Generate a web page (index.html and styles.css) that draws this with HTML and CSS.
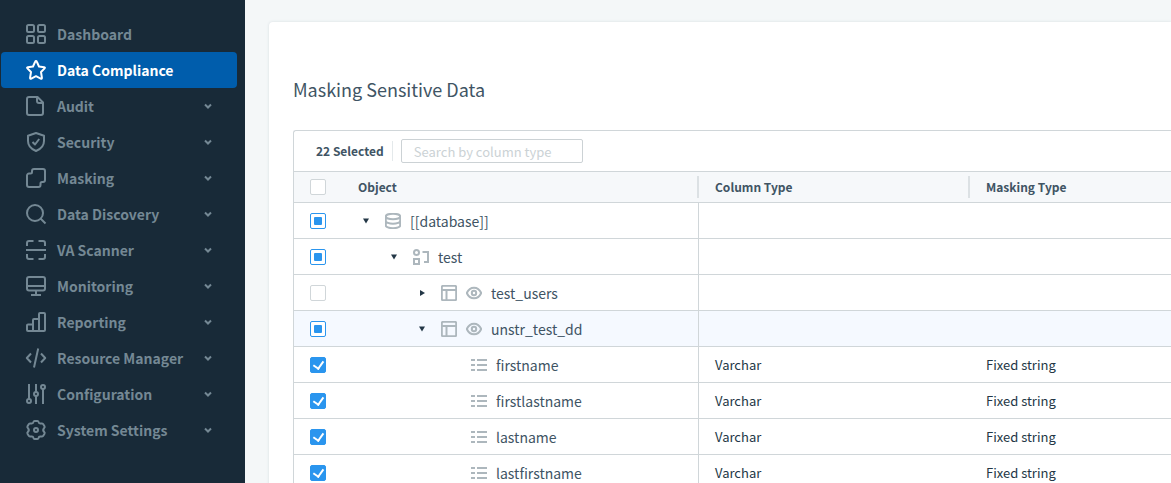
FILE: index.html
```html
<!DOCTYPE html>
<html lang="en">
<head>
<meta charset="utf-8">
<title>Masking Sensitive Data</title>
<link rel="stylesheet" href="styles.css">
</head>
<body>
<svg class="sprite" aria-hidden="true">
  <symbol id="chevron" viewBox="0 0 8 8"><path d="M1 2.500 4 5.500 7 2.500" /></symbol>
  <symbol id="caret-down" viewBox="0 0 8 8"><path d="M1 1.500h6L4 6.500z"/></symbol>
  <symbol id="caret-right" viewBox="0 0 8 8"><path d="M2 1v6l5-3z"/></symbol>
  <symbol id="database" viewBox="0 0 16 16"><ellipse cx="8" cy="3.500" rx="7.200" ry="2.700"/><path d="M.8 3.500v9c0 1.400 3.200 2.700 7.200 2.700s7.200-1.300 7.200-2.700v-9M.8 8c0 1.400 3.200 2.700 7.200 2.700S15.200 9.400 15.200 8"/></symbol>
  <symbol id="schema" viewBox="0 0 16 16"><circle cx="3.500" cy="3.500" r="2.500"/><path d="M1 10h5v5H1zM9.500 3H15v10H11"/></symbol>
  <symbol id="table" viewBox="0 0 16 16"><rect x=".8" y=".8" width="14.400" height="14.400" rx="1.500"/><path d="M1 5h14M5.500 5v10"/></symbol>
  <symbol id="eye" viewBox="0 0 16 16"><path d="M.8 8C2.300 4.500 4.900 2.700 8 2.700S13.700 4.500 15.200 8c-1.500 3.500-4.100 5.300-7.200 5.300S2.300 11.500.8 8z"/><circle cx="8" cy="8" r="2.200"/></symbol>
  <symbol id="list" viewBox="0 0 16 16"><path d="M0 3h4M6 3h10M0 8h4M6 8h10M0 13h4M6 13h10"/></symbol>
</svg>
<div class="app">
  <nav class="sidebar" aria-label="Main">
    <a class="item" href="#dashboard"><svg class="icon" viewBox="0 0 20 20"><rect x="1" y="1" width="7" height="7" rx="1.500"/><rect x="12" y="1" width="7" height="7" rx="1.500"/><rect x="1" y="12" width="7" height="7" rx="1.500"/><rect x="12" y="12" width="7" height="7" rx="1.500"/></svg><span class="label">Dashboard</span></a>
    <a class="item active" href="#compliance" aria-current="page"><svg class="icon" viewBox="0 0 20 20"><path d="M10 1q.5 0 .8.700L13 6.500l5.200.7q1.200.3.400 1.200L15 12l.9 5.700q.1 1.500-1.200.9L10 16.200l-4.700 2.400q-1.300.6-1.200-.9L5 12 1.400 8.400q-.8-.9.400-1.200L7 6.500l2.200-4.800Q9.500 1 10 1z"/></svg><span class="label">Data Compliance</span></a>
    <button class="item" type="button"><svg class="icon" viewBox="0 0 20 20"><path d="M11.500 1H3a2 2 0 0 0-2 2v14a2 2 0 0 0 2 2h12a2 2 0 0 0 2-2V6.500zM11 1v4a2 2 0 0 0 2 2h4"/></svg><span class="label">Audit</span><svg class="chevron"><use href="#chevron"/></svg></button>
    <button class="item" type="button"><svg class="icon" viewBox="0 0 20 20"><path d="M10 1 18 3.700V9c0 5-3 8-8 10-5-2-8-5-8-10V3.700zM6.500 10l2.500 2.500L13.200 7"/></svg><span class="label">Security</span><svg class="chevron"><use href="#chevron"/></svg></button>
    <button class="item" type="button"><svg class="icon" viewBox="0 0 20 20"><path d="M8 1h9a2 2 0 0 1 2 2v9a2 2 0 0 1-2 2h-1q-1.500 0-1.500 1.500V17a2 2 0 0 1-2 2H3a2 2 0 0 1-2-2V7.500a2 2 0 0 1 2-2h1.500Q6 5.500 6 4V3a2 2 0 0 1 2-2z"/></svg><span class="label">Masking</span><svg class="chevron"><use href="#chevron"/></svg></button>
    <button class="item" type="button"><svg class="icon" viewBox="0 0 20 20"><circle cx="9" cy="9" r="8"/><path d="m14.500 14.500 5 5"/></svg><span class="label">Data Discovery</span><svg class="chevron"><use href="#chevron"/></svg></button>
    <button class="item" type="button"><svg class="icon" viewBox="0 0 20 20"><path d="M7.500 1H3a2 2 0 0 0-2 2v3M12.500 1H17a2 2 0 0 1 2 2v3M1 14v3a2 2 0 0 0 2 2h4.500M19 14v3a2 2 0 0 1-2 2h-4.500M0 10h20"/></svg><span class="label">VA Scanner</span><svg class="chevron"><use href="#chevron"/></svg></button>
    <button class="item" type="button"><svg class="icon" viewBox="0 0 20 20"><rect x="1" y="1" width="18" height="13.500" rx="2"/><path d="M1 10h18M10 14.500V19M5 19h10"/></svg><span class="label">Monitoring</span><svg class="chevron"><use href="#chevron"/></svg></button>
    <button class="item" type="button"><svg class="icon" viewBox="0 0 20 20"><path d="M7 19H2a1 1 0 0 1-1-1v-4.500a1 1 0 0 1 1-1h5M7 19V8a1 1 0 0 1 1-1h5M7 19h6V2a1 1 0 0 1 1-1h4a1 1 0 0 1 1 1v16a1 1 0 0 1-1 1h-5"/></svg><span class="label">Reporting</span><svg class="chevron"><use href="#chevron"/></svg></button>
    <button class="item" type="button"><svg class="icon" viewBox="0 0 20 20"><path d="M5 5.500.8 10 5 14.500M15 5.500l4.200 4.500-4.200 4.500M12.200.5 8 19.500"/></svg><span class="label">Resource Manager</span><svg class="chevron"><use href="#chevron"/></svg></button>
    <button class="item" type="button"><svg class="icon" viewBox="0 0 20 20"><circle cx="3" cy="17" r="2"/><circle cx="10" cy="10" r="2"/><circle cx="17" cy="3" r="2"/><path d="M3 0v15M10 0v8M10 12v8M17 5v15"/></svg><span class="label">Configuration</span><svg class="chevron"><use href="#chevron"/></svg></button>
    <button class="item" type="button"><svg class="icon" viewBox="0 0 20 20"><path d="M8.600 1h2.800q.9 0 1.100.9.400 2 2.400 1.600 1.600-.3 2.200.5l1.400 2.300q.5.900-.3 1.600-2 2.100 0 4.200.8.700.3 1.600l-1.400 2.300q-.6.800-2.200.5-2-.4-2.400 1.600-.2.900-1.100.9H8.600q-.9 0-1.100-.9-.4-2-2.400-1.600-1.600.3-2.200-.5l-1.400-2.300q-.5-.9.300-1.600 2-2.100 0-4.200-.8-.7-.3-1.600l1.400-2.300q.6-.8 2.200-.5 2 .4 2.400-1.600.2-.9 1.100-.9z"/><circle cx="10" cy="10" r="2"/></svg><span class="label">System Settings</span><svg class="chevron"><use href="#chevron"/></svg></button>
  </nav>
  <main class="main">
    <section class="card">
      <h1 class="title">Masking Sensitive Data</h1>
      <div class="panel">
        <div class="toolbar">
          <span class="count">22 Selected</span>
          <input class="search" type="text" placeholder="Search by column type" aria-label="Search by column type">
        </div>
        <table class="grid">
          <colgroup><col class="col-check"><col class="col-object"><col class="col-type"><col></colgroup>
          <thead>
            <tr><th><input class="check" type="checkbox" aria-label="Select all"></th><th><span class="head">Object</span></th><th><span class="head">Column Type</span></th><th>Masking Type</th></tr>
          </thead>
          <tbody>
            <tr><td><input class="check partial" type="checkbox" id="r1"></td><td><div class="node"><button class="toggle" type="button" aria-label="Collapse"><svg class="caret"><use href="#caret-down"/></svg></button><svg class="glyph"><use href="#database"/></svg><label for="r1">[[database]]</label></div></td><td></td><td></td></tr>
            <tr><td><input class="check partial" type="checkbox" id="r2"></td><td><div class="node level-1"><button class="toggle" type="button" aria-label="Collapse"><svg class="caret"><use href="#caret-down"/></svg></button><svg class="glyph"><use href="#schema"/></svg><label for="r2">test</label></div></td><td></td><td></td></tr>
            <tr><td><input class="check" type="checkbox" id="r3"></td><td><div class="node level-2"><button class="toggle" type="button" aria-label="Expand"><svg class="caret"><use href="#caret-right"/></svg></button><svg class="glyph"><use href="#table"/></svg><svg class="glyph"><use href="#eye"/></svg><label for="r3">test_users</label></div></td><td></td><td></td></tr>
            <tr class="current"><td><input class="check partial" type="checkbox" id="r4"></td><td><div class="node level-2"><button class="toggle" type="button" aria-label="Collapse"><svg class="caret"><use href="#caret-down"/></svg></button><svg class="glyph"><use href="#table"/></svg><svg class="glyph"><use href="#eye"/></svg><label for="r4">unstr_test_dd</label></div></td><td></td><td></td></tr>
            <tr><td><input class="check" type="checkbox" id="r5" checked></td><td><div class="node leaf"><svg class="glyph"><use href="#list"/></svg><label for="r5">firstname</label></div></td><td>Varchar</td><td>Fixed string</td></tr>
            <tr><td><input class="check" type="checkbox" id="r6" checked></td><td><div class="node leaf"><svg class="glyph"><use href="#list"/></svg><label for="r6">firstlastname</label></div></td><td>Varchar</td><td>Fixed string</td></tr>
            <tr><td><input class="check" type="checkbox" id="r7" checked></td><td><div class="node leaf"><svg class="glyph"><use href="#list"/></svg><label for="r7">lastname</label></div></td><td>Varchar</td><td>Fixed string</td></tr>
            <tr><td><input class="check" type="checkbox" id="r8" checked></td><td><div class="node leaf"><svg class="glyph"><use href="#list"/></svg><label for="r8">lastfirstname</label></div></td><td>Varchar</td><td>Fixed string</td></tr>
          </tbody>
        </table>
      </div>
    </section>
  </main>
</div>
</body>
</html>
```
FILE: styles.css
```css
* { box-sizing: border-box; }
body {
  margin: 0;
  font: 13px/20px "Noto Sans CJK SC", "Noto Sans", sans-serif;
  color: #233746;
}
button, input { font: inherit; color: inherit; }
.sprite { position: absolute; width: 0; height: 0; }

.app { display: flex; height: 100vh; overflow: hidden; }

.sidebar {
  flex: none;
  width: 245px;
  padding: 16px 8px 16px 1px;
  background: #182a38;
}
.item {
  display: flex;
  align-items: center;
  gap: 11px;
  width: 100%;
  height: 36px;
  padding: 0 25px;
  border: 0;
  border-radius: 4px;
  background: none;
  color: #748894;
  font-size: 14px;
  font-weight: 700;
  text-align: left;
  text-decoration: none;
}
.item.active { background: #005dac; color: #fff; }
.label { flex: 1; white-space: nowrap; }
.icon {
  flex: none;
  width: 20px;
  height: 20px;
  fill: none;
  stroke: currentColor;
  stroke-width: 2;
  stroke-linejoin: round;
  overflow: visible;
}
.chevron { width: 8px; height: 8px; fill: none; stroke: currentColor; stroke-width: 2; overflow: visible; }

.main { flex: 1; min-width: 0; padding: 22px 0 0 24px; background: #f4f7f8; }
.card {
  min-height: 100%;
  padding: 55px 0 0 24px;
  border-radius: 4px 0 0 0;
  background: #fff;
  box-shadow: 0 0 3px #d5dde0;
}
.title { margin: 0 0 29px; font-size: 18px; line-height: 24px; font-weight: 400; color: #405464; }

.panel { border: solid #d0d6d9; border-width: 1px 0 0 1px; border-radius: 3px 0 0 0; }
.toolbar { display: flex; align-items: center; height: 40px; padding-left: 22px; }
.count { padding-right: 8px; margin-right: 8px; border-right: 1px solid #e4e9eb; font-size: 12px; font-weight: 700; color: #405464; }
.search {
  width: 182px;
  height: 24px;
  padding: 0 12px;
  border: 1px solid #ccd2d5;
  border-radius: 2px;
  background: #fff;
}
.search::placeholder { color: #cbd2d5; opacity: 1; }

.grid { width: 100%; table-layout: fixed; border-collapse: separate; border-spacing: 0; }
.col-check { width: 48px; }
.col-object { width: 357px; }
.col-type { width: 271px; }
th, td { padding: 0 0 0 16px; text-align: left; border-bottom: 1px solid #d0d6d9; }
th { height: 32px; border-top: 1px solid #d0d6d9; background: #f6f8fa; font-size: 12px; font-weight: 700; color: #405464; }
td { height: 36px; }
td:nth-child(2) { border-right: 1px solid #d0d6d9; }
.current td { background: #f5f9ff; }
.head { display: block; line-height: 22px; border-right: 2px solid #dce1e4; }

.check {
  appearance: none;
  display: grid;
  place-items: center;
  width: 16px;
  height: 16px;
  margin: 0;
  border: 1px solid #d0d6d9;
  border-radius: 2px;
  background: #fff;
}
.check:checked, .check.partial { border-color: #2a95ee; }
.check:checked { background: #2a95ee; }
.check:checked::before {
  content: "";
  width: 5px;
  height: 8px;
  margin-bottom: 1px;
  border: solid #fff;
  border-width: 0 2px 2px 0;
  transform: rotate(35deg);
}
.check.partial::before { content: ""; width: 8px; height: 8px; border-radius: 1px; background: #2a95ee; }

.node { display: flex; align-items: center; gap: 9px; font-size: 14px; color: #405464; }
.level-1 { padding-left: 28px; }
.level-2 { padding-left: 56px; }
.leaf { padding-left: 113px; }
.toggle { display: grid; place-items: center; width: 16px; height: 16px; margin-right: 2px; padding: 0; border: 0; background: none; }
.caret { width: 8px; height: 8px; fill: #233746; }
.glyph { width: 16px; height: 16px; fill: none; stroke: #adb7bd; stroke-width: 2; }
```
